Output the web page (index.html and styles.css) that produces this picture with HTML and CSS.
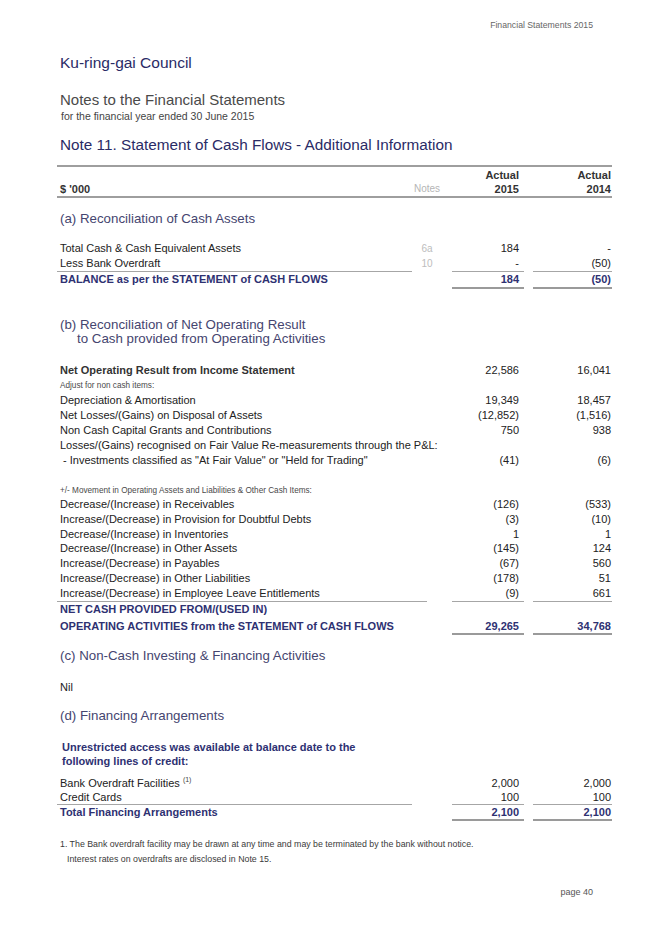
FILE: index.html
```html
<!DOCTYPE html>
<html lang="en">
<head>
<meta charset="utf-8">
<title>Note 11. Statement of Cash Flows</title>
<link rel="stylesheet" href="styles.css">
</head>
<body>
<div class="page">
  <div class="running">Financial Statements 2015</div>
  <div class="content">
    <h1 class="council">Ku-ring-gai Council</h1>
    <h2 class="doc-title">Notes to the Financial Statements</h2>
    <div class="doc-sub">for the financial year ended 30 June 2015</div>
    <h2 class="note-title">Note 11. Statement of Cash Flows - Additional Information</h2>

    <div class="thead">
      <div class="row hrow"><span class="lbl"></span><span class="nt"></span><span class="c1">Actual</span><span class="c2">Actual</span></div>
      <div class="row hrow"><span class="lbl">$ '000</span><span class="nt notes-h">Notes</span><span class="c1">2015</span><span class="c2">2014</span></div>
    </div>

    <h3 class="sec sec-a">(a) Reconciliation of Cash Assets</h3>
    <div class="block block-a">
      <div class="row"><span class="lbl">Total Cash &amp; Cash Equivalent Assets</span><span class="nt">6a</span><span class="c1">184</span><span class="c2">-</span></div>
      <div class="row"><span class="lbl u">Less Bank Overdraft</span><span class="nt">10</span><span class="c1 u">-</span><span class="c2 u">(50)</span></div>
      <div class="row total"><span class="lbl">BALANCE as per the STATEMENT of CASH FLOWS</span><span class="nt"></span><span class="c1 uu">184</span><span class="c2 uu">(50)</span></div>
    </div>

    <h3 class="sec sec-b">(b) Reconciliation of Net Operating Result<br><span class="sec-indent">to Cash provided from Operating Activities</span></h3>
    <div class="block block-b">
      <div class="row"><span class="lbl strong">Net Operating Result from Income Statement</span><span class="nt"></span><span class="c1">22,586</span><span class="c2">16,041</span></div>
      <div class="row small-row"><span class="lbl small">Adjust for non cash items:</span></div>
      <div class="row"><span class="lbl">Depreciation &amp; Amortisation</span><span class="nt"></span><span class="c1">19,349</span><span class="c2">18,457</span></div>
      <div class="row"><span class="lbl">Net Losses/(Gains) on Disposal of Assets</span><span class="nt"></span><span class="c1">(12,852)</span><span class="c2">(1,516)</span></div>
      <div class="row"><span class="lbl">Non Cash Capital Grants and Contributions</span><span class="nt"></span><span class="c1">750</span><span class="c2">938</span></div>
      <div class="row"><span class="lbl wide">Losses/(Gains) recognised on Fair Value Re-measurements through the P&amp;L:</span></div>
      <div class="row"><span class="lbl">&nbsp;- Investments classified as "At Fair Value" or "Held for Trading"</span><span class="nt"></span><span class="c1">(41)</span><span class="c2">(6)</span></div>

      <div class="row small-row movement"><span class="lbl small wide">+/- Movement in Operating Assets and Liabilities &amp; Other Cash Items:</span></div>
      <div class="row tight"><span class="lbl">Decrease/(Increase) in Receivables</span><span class="nt"></span><span class="c1">(126)</span><span class="c2">(533)</span></div>
      <div class="row tight"><span class="lbl">Increase/(Decrease) in Provision for Doubtful Debts</span><span class="nt"></span><span class="c1">(3)</span><span class="c2">(10)</span></div>
      <div class="row tight"><span class="lbl">Decrease/(Increase) in Inventories</span><span class="nt"></span><span class="c1">1</span><span class="c2">1</span></div>
      <div class="row tight"><span class="lbl">Decrease/(Increase) in Other Assets</span><span class="nt"></span><span class="c1">(145)</span><span class="c2">124</span></div>
      <div class="row tight"><span class="lbl">Increase/(Decrease) in Payables</span><span class="nt"></span><span class="c1">(67)</span><span class="c2">560</span></div>
      <div class="row tight"><span class="lbl">Increase/(Decrease) in Other Liabilities</span><span class="nt"></span><span class="c1">(178)</span><span class="c2">51</span></div>
      <div class="row tight"><span class="lbl u ext">Increase/(Decrease) in Employee Leave Entitlements</span><span class="c1 u">(9)</span><span class="c2 u">661</span></div>
      <div class="row total total-top"><span class="lbl wide">NET CASH PROVIDED FROM/(USED IN)</span></div>
      <div class="row total total-bottom"><span class="lbl">OPERATING ACTIVITIES from the STATEMENT of CASH FLOWS</span><span class="nt"></span><span class="c1 uu">29,265</span><span class="c2 uu">34,768</span></div>
    </div>

    <h3 class="sec sec-c">(c) Non-Cash Investing &amp; Financing Activities</h3>
    <p class="nil">Nil</p>

    <h3 class="sec sec-d">(d) Financing Arrangements</h3>
    <p class="intro">Unrestricted access was available at balance date to the<br>following lines of credit:</p>
    <div class="block block-d">
      <div class="row fin"><span class="lbl">Bank Overdraft Facilities <sup class="ref">(1)</sup></span><span class="nt"></span><span class="c1">2,000</span><span class="c2">2,000</span></div>
      <div class="row fin"><span class="lbl u">Credit Cards</span><span class="nt"></span><span class="c1 u">100</span><span class="c2 u">100</span></div>
      <div class="row fin total"><span class="lbl">Total Financing Arrangements</span><span class="nt"></span><span class="c1 uu">2,100</span><span class="c2 uu">2,100</span></div>
    </div>

    <div class="footnote">
      <p>1. The Bank overdraft facility may be drawn at any time and may be terminated by the bank without notice.</p>
      <p class="fn-indent">Interest rates on overdrafts are disclosed in Note 15.</p>
    </div>
  </div>
  <div class="page-no">page 40</div>
</div>
</body>
</html>
```

FILE: styles.css
```css
* { box-sizing: border-box; }

html, body {
  margin: 0;
  padding: 0;
  background: #ffffff;
}

body {
  font-family: "Liberation Sans", Arial, sans-serif;
  color: #222222;
  font-size: 11px;
}

.page {
  width: 656px;
  height: 928px;
  overflow: hidden;
}

.running {
  padding-top: 19px;
  padding-right: 63px;
  text-align: right;
  font-size: 8.7px;
  line-height: 12px;
  color: #666666;
}

.content {
  margin-left: 57px;
  width: 555px;
}

h1, h2, h3, p {
  margin: 0;
  font-weight: normal;
}

.council {
  margin-top: 22px;
  padding-left: 3px;
  font-size: 15.5px;
  line-height: 20px;
  color: #2a2b66;
}

.doc-title {
  margin-top: 18px;
  padding-left: 3px;
  font-size: 15px;
  line-height: 18px;
  color: #4a4a4a;
}

.doc-sub {
  padding-left: 4px;
  font-size: 10.5px;
  line-height: 14px;
  color: #444444;
}

.note-title {
  margin-top: 12px;
  padding-left: 3px;
  font-size: 15.3px;
  line-height: 20px;
  color: #2a2b66;
}

/* table rows */
.row {
  display: grid;
  grid-template-columns: 355px 40px 72px 88px;
  line-height: 15px;
  font-size: 11px;
}

.lbl {
  padding-left: 3px;
  white-space: nowrap;
}

.nt {
  text-align: center;
  padding-right: 10px;
  color: #bdbdbd;
  font-size: 10px;
}

.c1 {
  text-align: right;
  padding-right: 5px;
}

.c2 {
  margin-left: 9px;
  text-align: right;
  padding-right: 1px;
}

.u { border-bottom: 1px solid #a6a6a6; }
.uu { border-bottom: 2px solid #9a9a9a; }

.lbl.wide { grid-column: 1 / 5; }
.lbl.ext { grid-column: 1 / 3; margin-right: 25px; }

.thead {
  margin-top: 10px;
  border-top: 2px solid #9e9e9e;
  border-bottom: 2px solid #9e9e9e;
  padding-top: 1px;
}

.hrow {
  line-height: 14px;
  font-weight: bold;
  color: #333333;
}

.hrow .notes-h {
  font-weight: normal;
  color: #b5b5b5;
  font-size: 10px;
}

.sec {
  padding-left: 3px;
  font-size: 13.3px;
  line-height: 18px;
  color: #45456f;
}

.sec-a { margin-top: 12px; }
.block-a { margin-top: 13px; }

.sec-b {
  margin-top: 29px;
  line-height: 14px;
}

.sec-indent { padding-left: 17px; }

.block-b { margin-top: 17px; }

.strong {
  font-weight: bold;
  color: #333333;
}

.small-row { line-height: 15px; }

.small {
  font-size: 8.2px;
  color: #4a4a4a;
}

.movement {
  margin-top: 16px;
  line-height: 13px;
}

.tight { line-height: 14.8px; }

.total {
  font-weight: bold;
  color: #2e3172;
}

.total-top {
  line-height: 14px;
  padding-bottom: 3px;
}

.total-bottom { line-height: 14px; }

.sec-c { margin-top: 12px; }

.nil {
  margin-top: 15px;
  padding-left: 3px;
  font-size: 11px;
  line-height: 14px;
}

.sec-d { margin-top: 13px; }

.intro {
  margin-top: 15px;
  padding-left: 5px;
  font-weight: bold;
  font-size: 11px;
  line-height: 14px;
  color: #2e3172;
}

.block-d { margin-top: 8px; }

.fin { line-height: 14px; }

.ref {
  font-size: 7px;
  line-height: 0;
  vertical-align: 5px;
  color: #444444;
}

.footnote {
  margin-top: 16px;
  padding-left: 3px;
  font-size: 8.8px;
  line-height: 15px;
  color: #3a3a3a;
}

.fn-indent { padding-left: 7px; }

.page-no {
  margin-top: 19px;
  padding-right: 63px;
  text-align: right;
  font-size: 9px;
  line-height: 12px;
  color: #555555;
}
```
